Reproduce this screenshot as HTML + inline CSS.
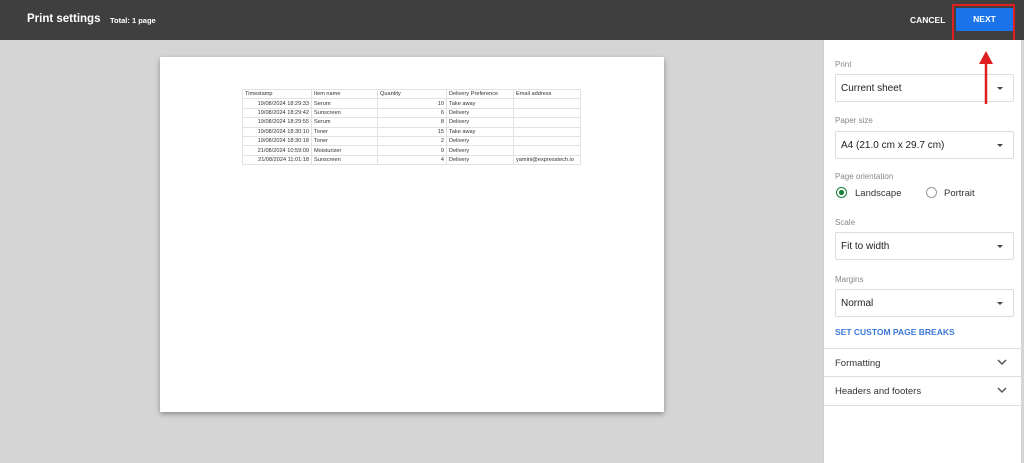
<!DOCTYPE html>
<html><head><meta charset="utf-8"><style>
*{box-sizing:border-box;margin:0;padding:0}
body{width:1024px;height:463px;overflow:hidden;background:#d5d5d5;font-family:"Liberation Sans",Arial,sans-serif;position:relative}
.hdr{position:absolute;left:0;top:0;width:1024px;height:40px;background:#3f3f3f}
.a{position:absolute}
.paper{position:absolute;left:160px;top:57px;width:504px;height:355px;background:#fff;box-shadow:0 2px 5px rgba(0,0,0,.35)}
table{position:absolute;left:242px;top:89px;border-collapse:collapse;font-size:5.6px;color:#333}
td{border:1px solid #e2e2e2;height:9.4px;padding:0 2px;white-space:nowrap;line-height:8px}
.r{text-align:right}
.panel{position:absolute;left:823px;top:40px;width:198px;height:423px;background:#fff;border-left:1px solid #ccc}
.lbl{position:absolute;left:11px;font-size:8px;color:#888}
.sel{position:absolute;left:11px;width:179px;height:28px;border:1px solid #ddd;border-radius:2px;font-size:10px;color:#222;padding:8px 0 0 5px}
.sel:after{content:"";position:absolute;right:10px;top:12px;border-left:3.5px solid transparent;border-right:3.5px solid transparent;border-top:3.5px solid #444}
.row{position:absolute;left:0;width:198px;height:28px;border-top:1px solid #ddd;font-size:9.5px;color:#333;padding:9px 0 0 11px}
.chev{position:absolute;right:15px;top:10px}
</style></head><body>
<div class="hdr"></div>
<div class="a" style="left:27px;top:13px;color:#fff;font-size:11.5px;font-weight:bold">Print settings</div>
<div class="a" style="left:110px;top:16px;color:#fff;font-size:7.5px;font-weight:bold">Total: 1 page</div>
<div class="a" style="left:910px;top:15px;color:#fff;font-size:8.5px;font-weight:bold">CANCEL</div>
<div class="a" style="left:956px;top:8px;width:57px;height:23px;background:#1a73e8;color:#fff;font-size:8.5px;font-weight:bold;text-align:center;line-height:23px">NEXT</div>
<div class="a" style="left:952px;top:4px;width:63px;height:38px;border:2px solid #e02020"></div>
<div class="paper"></div>
<table>
<tr><td style="width:69px">Timestamp</td><td style="width:66px">Item name</td><td style="width:69px">Quantity</td><td style="width:67px">Delivery Preference</td><td style="width:67px">Email address</td></tr>
<tr><td class="r">19/08/2024 18:29:33</td><td>Serum</td><td class="r">10</td><td>Take away</td><td></td></tr>
<tr><td class="r">19/08/2024 18:29:42</td><td>Sunscreen</td><td class="r">6</td><td>Delivery</td><td></td></tr>
<tr><td class="r">19/08/2024 18:29:55</td><td>Serum</td><td class="r">8</td><td>Delivery</td><td></td></tr>
<tr><td class="r">19/08/2024 18:30:10</td><td>Toner</td><td class="r">15</td><td>Take away</td><td></td></tr>
<tr><td class="r">19/08/2024 18:30:18</td><td>Toner</td><td class="r">2</td><td>Delivery</td><td></td></tr>
<tr><td class="r">21/08/2024 10:59:09</td><td>Moisturizer</td><td class="r">9</td><td>Delivery</td><td></td></tr>
<tr><td class="r">21/08/2024 11:01:18</td><td>Sunscreen</td><td class="r">4</td><td>Delivery</td><td>yamini@expresstech.io</td></tr>
</table>
<div class="panel">
<div class="lbl" style="top:20px">Print</div>
<div class="sel" style="top:34px">Current sheet</div>
<div class="lbl" style="top:76px">Paper size</div>
<div class="sel" style="top:91px">A4 (21.0 cm x 29.7 cm)</div>
<div class="lbl" style="top:132px">Page orientation</div>
<div class="a" style="left:12px;top:147px;width:11px;height:11px;border:1.5px solid #188038;border-radius:50%"><div style="margin:2px;width:4.5px;height:4.5px;border-radius:50%;background:#188038"></div></div>
<div class="a" style="left:31px;top:148px;font-size:9.5px;color:#333">Landscape</div>
<div class="a" style="left:102px;top:147px;width:11px;height:11px;border:1.2px solid #999;border-radius:50%"></div>
<div class="a" style="left:120px;top:148px;font-size:9.5px;color:#333">Portrait</div>
<div class="lbl" style="top:178px">Scale</div>
<div class="sel" style="top:192px">Fit to width</div>
<div class="lbl" style="top:235px">Margins</div>
<div class="sel" style="top:249px">Normal</div>
<div class="a" style="left:11px;top:287px;font-size:8.5px;font-weight:bold;color:#3b78d8">SET CUSTOM PAGE BREAKS</div>
<div class="row" style="top:308px">Formatting<svg class="chev" width="10" height="7" viewBox="0 0 10 7"><path d="M1 1l4 4 4-4" stroke="#555" stroke-width="1.5" fill="none"/></svg></div>
<div class="row" style="top:336px">Headers and footers<svg class="chev" width="10" height="7" viewBox="0 0 10 7"><path d="M1 1l4 4 4-4" stroke="#555" stroke-width="1.5" fill="none"/></svg></div>
<div class="a" style="left:0;top:365px;width:198px;border-top:1px solid #ddd"></div>
</div>
<svg class="a" style="left:976px;top:48px" width="20" height="58" viewBox="0 0 20 58"><path d="M10 56V12" stroke="#e02020" stroke-width="2.5"/><path d="M3 16L10 3l7 13z" fill="#e02020"/></svg>
</body></html>
